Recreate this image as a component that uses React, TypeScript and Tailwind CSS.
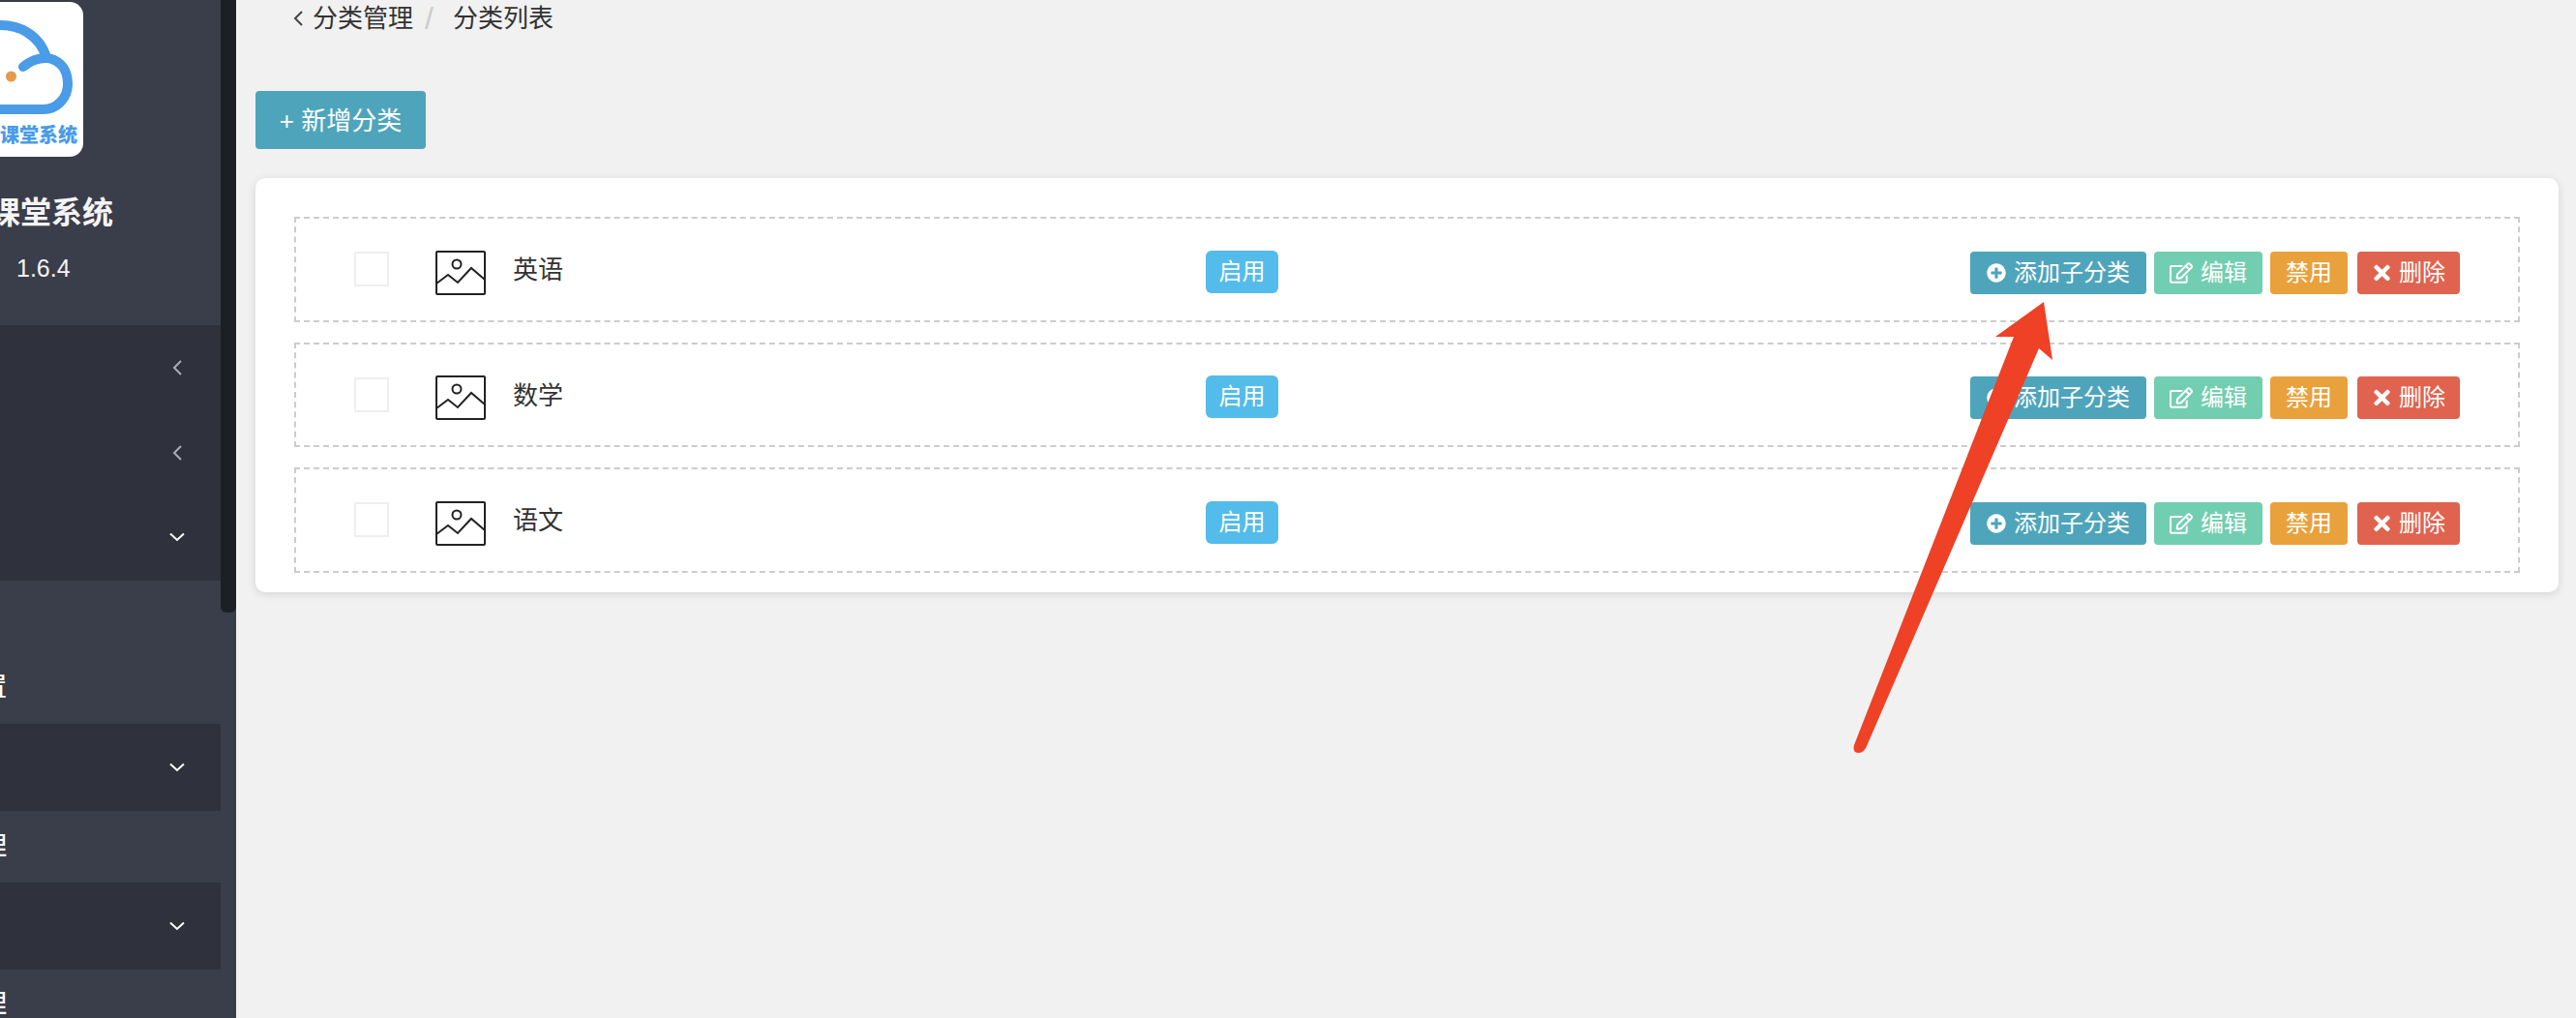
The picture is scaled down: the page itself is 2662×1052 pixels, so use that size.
import React from 'react';
import { FaPlusCircle, FaRegEdit, FaTimes } from 'react-icons/fa';

const rows = ['英语', '数学', '语文'];

function ChevronLeft() {
  return (
    <svg width="10" height="16" viewBox="0 0 10 16" fill="none" stroke="#a9adb6" strokeWidth="2">
      <path d="M9 1 L2 8 L9 15" />
    </svg>
  );
}

function ChevronDown() {
  return (
    <svg width="16" height="10" viewBox="0 0 16 10" fill="none" stroke="#ffffff" strokeWidth="2">
      <path d="M1 1.5 L8 8 L15 1.5" />
    </svg>
  );
}

function ImageIcon() {
  return (
    <svg width="52" height="46" viewBox="0 0 52 46" fill="none" stroke="#222222" strokeWidth="2">
      <rect x="1" y="1" width="50" height="44" rx="1" />
      <circle cx="22" cy="14" r="4.5" />
      <path d="M1 34 L13 25 L23 33 L37 18 L51 30" />
    </svg>
  );
}

function CloudLogo() {
  return (
    <div className="relative h-[160px] w-[86px] rounded-r-[14px] bg-white overflow-hidden">
      <svg className="absolute left-0 top-[-2px]" width="86" height="130" viewBox="0 0 86 130" fill="none" stroke="#4a9be8" strokeWidth="10" strokeLinecap="round">
        <path d="M-10 27 C 20 22 42 38 48 60" />
        <path d="M24 69 C 35 60 48 58 56 62 C 67 67 70 78 70 87 C 70 102 58 113 45 113 L-10 113" />
        <circle cx="11.5" cy="79" r="5.5" fill="#e39a4c" stroke="none" />
      </svg>
      <div className="absolute right-[6px] top-[125px] flex justify-end whitespace-nowrap text-[20px] leading-[26px] font-black text-[#4a9be8]">
        课堂系统
      </div>
    </div>
  );
}

function ClippedLabel({ text }: { text: string }) {
  return (
    <div className="flex h-[36px] w-[7px] items-center justify-end overflow-hidden">
      <span className="shrink-0 whitespace-nowrap text-[26px] leading-[36px] font-medium text-white">{text}</span>
    </div>
  );
}

function Sidebar() {
  return (
    <div className="relative h-full w-[244px] shrink-0 bg-[#3a3d4a]">
      <div className="w-[228px]">
        <div className="h-[336px] pt-[2px]">
          <CloudLogo />
          <div className="mt-[38px] flex h-[40px] w-[117px] items-center justify-end overflow-hidden">
            <span className="shrink-0 whitespace-nowrap text-[32px] leading-[40px] font-bold text-[#f4f4f5]">云课堂系统</span>
          </div>
          <div className="mt-[22px] pl-[17px] text-[25px] leading-[30px] text-[#f4f4f5]">1.6.4</div>
        </div>
        <div className="h-[264px] bg-[#2f323d]">
          <div className="flex h-[88px] items-center justify-end pr-[40px]">
            <ChevronLeft />
          </div>
          <div className="flex h-[87px] items-center justify-end pr-[40px]">
            <ChevronLeft />
          </div>
          <div className="flex h-[87px] items-center justify-end pr-[37px]">
            <ChevronDown />
          </div>
        </div>
        <div className="pt-[92px]">
          <ClippedLabel text="系统设置" />
        </div>
        <div className="mt-[20px] flex h-[90px] items-center justify-end bg-[#2f323d] pr-[37px]">
          <ChevronDown />
        </div>
        <div className="mt-[18px]">
          <ClippedLabel text="分类管理" />
        </div>
        <div className="mt-[20px] flex h-[90px] items-center justify-end bg-[#2f323d] pr-[37px]">
          <ChevronDown />
        </div>
        <div className="mt-[17px]">
          <ClippedLabel text="课程管理" />
        </div>
      </div>
      <div className="absolute right-0 top-0 h-[633px] w-[16px] rounded-b-[6px] bg-[#1d1f26]" />
    </div>
  );
}

function RowItem({ name }: { name: string }) {
  return (
    <div className="flex h-[108.5px] items-center border-2 border-dashed border-[#cccccc] pl-[60px] pr-[60px]">
      <div className="h-[36px] w-[36px] border-2 border-[#eeeeee] bg-white" />
      <div className="ml-[48px] mt-[7px]">
        <ImageIcon />
      </div>
      <div className="ml-[28px] mt-[2px] w-[716px] text-[26px] leading-[36px] text-[#333333]">{name}</div>
      <div className="mt-[5px] flex h-[44px] w-[75px] items-center justify-center rounded-[6px] bg-[#54bcea] text-[24px] text-white">
        启用
      </div>
      <div className="ml-auto mt-[7px] flex items-center text-[24px] text-white">
        <div className="flex h-[44px] w-[182px] items-center gap-[8px] rounded-[4px] bg-[#4ea5bb] pl-[17px]">
          <FaPlusCircle className="h-[20px] w-[20px]" />
          <span>添加子分类</span>
        </div>
        <div className="ml-[8px] flex h-[44px] w-[112px] items-center gap-[8px] rounded-[4px] bg-[#72ceb0] pl-[16px]">
          <FaRegEdit className="h-[22px] w-[24px]" />
          <span>编辑</span>
        </div>
        <div className="ml-[8px] flex h-[44px] w-[80px] items-center justify-center rounded-[4px] bg-[#e9a13c]">禁用</div>
        <div className="ml-[10px] flex h-[44px] w-[106px] items-center gap-[9px] rounded-[4px] bg-[#e0634f] pl-[17px]">
          <FaTimes className="h-[24px] w-[17px]" />
          <span>删除</span>
        </div>
      </div>
    </div>
  );
}

export default function App() {
  return (
    <div className="relative flex h-[1052px] w-[2662px] overflow-hidden bg-[#f1f1f1] font-['Liberation_Sans','Noto_Sans_CJK_SC',sans-serif]">
      <Sidebar />
      <div className="min-w-0 flex-1 pl-[20px] pr-[18px]">
        <div className="flex h-[38px] items-center text-[26px] leading-[36px] text-[#333333]">
          <svg className="ml-[39px]" width="10" height="16" viewBox="0 0 10 16" fill="none" stroke="#444444" strokeWidth="2">
            <path d="M9 1 L2 8 L9 15" />
          </svg>
          <span className="ml-[10px]">分类管理</span>
          <span className="ml-[12px] text-[32px] font-light text-[#cccccc]">/</span>
          <span className="ml-[20px]">分类列表</span>
        </div>
        <div className="mt-[56px] flex h-[60px] w-[176px] items-center justify-center rounded-[4px] bg-[#4ea5bb] pt-[3px] text-[26px] text-white">
          + 新增分类
        </div>
        <div className="mt-[30px] flex flex-col gap-[21px] rounded-[10px] bg-white px-[40px] pb-[20px] pt-[40px] shadow-[0_2px_10px_rgba(0,0,0,0.12)]">
          {rows.map((name) => (
            <RowItem key={name} name={name} />
          ))}
        </div>
      </div>
      {/* red annotation arrow drawn over the page */}
      <svg className="pointer-events-none absolute left-0 top-0" width="2662" height="1052" viewBox="0 0 2662 1052">
        <path
          d="M2112 312 L2062 348 L2081 348 L1916 770 Q1914 778 1921 778 Q1926 778 1929 771 L2107 360 L2121 372 Z"
          fill="#ee4126"
        />
      </svg>
    </div>
  );
}
